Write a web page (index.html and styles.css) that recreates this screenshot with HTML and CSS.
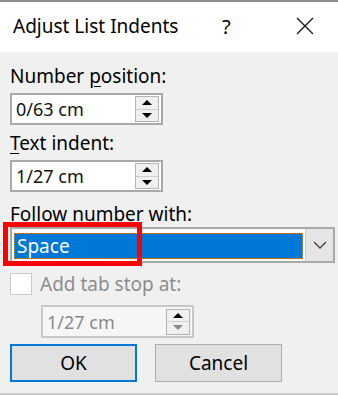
FILE: index.html
```html
<!DOCTYPE html>
<html>
<head>
    <title>Adjust List Indents</title>
    <link rel="stylesheet" href="styles.css">
</head>
<body>
    <div class="dialog">
        <div class="titlebar">
            <span class="title">Adjust List Indents</span>
            <span class="help">?</span>
            <svg class="close" width="18" height="18" viewBox="0 0 18 18">
                <path d="M1 1 L17 17 M17 1 L1 17" stroke="#1a1a1a" stroke-width="1.4" fill="none"/>
            </svg>
        </div>
        <div class="content">
            <label class="label lbl-first">Number <u>p</u>osition:</label>
            <div class="spin">
                <span class="spin-value">0/63 cm</span>
                <div class="spin-buttons">
                    <div class="spin-up"><span class="arrow-up"></span></div>
                    <div class="spin-down"><span class="arrow-down"></span></div>
                </div>
            </div>
            <label class="label"><u>T</u>ext indent:</label>
            <div class="spin">
                <span class="spin-value">1/27 cm</span>
                <div class="spin-buttons">
                    <div class="spin-up"><span class="arrow-up"></span></div>
                    <div class="spin-down"><span class="arrow-down"></span></div>
                </div>
            </div>
            <label class="label lbl-follow">Follo<u>w</u> number with:</label>
            <div class="select-wrap">
                <div class="select">
                    <div class="select-value"><span>Space</span></div>
                    <div class="select-btn">
                        <svg width="14" height="8" viewBox="0 0 14 8">
                            <path d="M1 1 L7 7 L13 1" stroke="#404040" stroke-width="1.3" fill="none"/>
                        </svg>
                    </div>
                </div>
                <div class="marker"></div>
            </div>
            <div class="check-row">
                <span class="checkbox"></span>
                <span class="check-label">Add tab stop at:</span>
            </div>
            <div class="spin spin-disabled">
                <span class="spin-value">1/27 cm</span>
                <div class="spin-buttons">
                    <div class="spin-up"><span class="arrow-up"></span></div>
                    <div class="spin-down"><span class="arrow-down"></span></div>
                </div>
            </div>
            <div class="buttons">
                <button class="btn btn-default">OK</button>
                <button class="btn">Cancel</button>
            </div>
        </div>
    </div>
</body>
</html>
```

FILE: styles.css
```css
body {
    margin: 0;
    font-family: 'Noto Sans', sans-serif;
    font-size: 19px;
    color: #000;
}
.dialog {
    width: 338px;
    height: 395px;
    box-sizing: border-box;
    border-top: 2px solid #8c8c8c;
    border-bottom: 2px solid #c8c8c8;
    background-color: #f0f0f0;
    display: flex;
    flex-direction: column;
}
.titlebar {
    height: 50px;
    background-color: #fff;
    display: flex;
    align-items: center;
    padding: 0 0 0 13px;
    flex-shrink: 0;
}
.title {
    font-size: 19px;
    width: 209px;
    padding-bottom: 2px;
}
.help {
    font-size: 20px;
    width: 74px;
    padding-bottom: 2px;
}
.close {
    margin-bottom: 2px;
}
.content {
    padding: 12px 10px 0 10px;
    display: flex;
    flex-direction: column;
    align-items: flex-start;
}
.label {
    line-height: 25px;
    height: 22px;
}
.label u {
    text-underline-offset: 3px;
}
.spin {
    width: 153px;
    height: 32px;
    box-sizing: border-box;
    border: 2px solid #a9a9a9;
    background-color: #fff;
    display: flex;
    align-items: center;
    margin: 7px 0 6px 0;
}
.spin-value {
    flex: 1;
    padding-left: 4px;
    line-height: 28px;
    font-size: 18px;
    color: #111;
}
.spin-buttons {
    width: 24px;
    height: 26px;
    margin-right: 2px;
    border: 1px solid #b4b4b4;
    box-sizing: border-box;
    display: flex;
    flex-direction: column;
}
.spin-up, .spin-down {
    flex: 1;
    display: flex;
    align-items: center;
    justify-content: center;
    background-color: #f0f0f0;
}
.spin-up {
    border-bottom: 1px solid #cfcfcf;
}
.arrow-up {
    border-left: 5px solid transparent;
    border-right: 5px solid transparent;
    border-bottom: 5px solid #000;
}
.arrow-down {
    border-left: 5px solid transparent;
    border-right: 5px solid transparent;
    border-top: 5px solid #000;
}
.lbl-follow {
    margin-top: 4px;
}
.select-wrap {
    position: relative;
    margin-top: 3px;
}
.select {
    width: 325px;
    height: 36px;
    box-sizing: border-box;
    border: 2px solid #a9a9a9;
    background-color: #fff;
    display: flex;
}
.select-value {
    flex: 1;
    padding: 4px 2px 2px 2px;
}
.select-value span {
    display: block;
    height: 100%;
    box-sizing: border-box;
    background-color: #0078d7;
    outline: 1px dotted #e08a2a;
    outline-offset: -1px;
    color: #fff;
    line-height: 26px;
    padding-left: 3px;
}
.select-btn {
    width: 27px;
    background-color: #e5e5e5;
    border-left: 1px solid #cfcfcf;
    display: flex;
    align-items: center;
    justify-content: center;
}
.marker {
    position: absolute;
    left: -7px;
    top: -5px;
    width: 139px;
    height: 44px;
    box-sizing: border-box;
    border: 5px solid #f00;
}
.check-row {
    display: flex;
    align-items: center;
    margin-top: 10px;
    height: 22px;
}
.checkbox {
    width: 22px;
    height: 22px;
    box-sizing: border-box;
    border: 1px solid #cccccc;
    background-color: #fff;
}
.check-label {
    color: #8d8d8d;
    margin-left: 8px;
}
.spin-disabled {
    margin: 10px 0 0 31px;
    height: 33px;
    border-color: #c8c8c8;
    background-color: #f6f6f6;
}
.spin-disabled .spin-value {
    color: #8a8a8a;
}
.spin-disabled .spin-up {
    background-color: #f0f0f0;
}
.spin-disabled .arrow-down {
    border-top-color: #8a8a8a;
}
.buttons {
    display: flex;
    gap: 18px;
    margin-top: 6px;
}
.btn {
    width: 127px;
    height: 38px;
    box-sizing: border-box;
    border: 1px solid #adadad;
    background-color: #e1e1e1;
    font-family: 'Noto Sans', sans-serif;
    font-size: 19px;
    color: #000;
    padding: 0;
}
.btn-default {
    border: 2px solid #0078d7;
}
```
